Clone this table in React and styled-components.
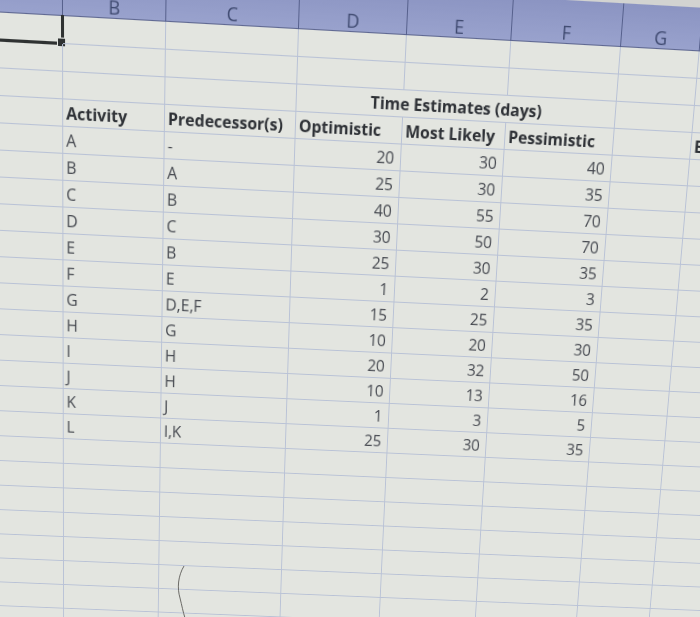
import React from "react";
import styled, { createGlobalStyle } from "styled-components";

// photo of an Excel sheet: the flat grid is laid out normally, then the whole
// sheet gets a perspective warp (matrix3d) so it sits like in the photo

const COLS = [
  { key: "A", width: 83 },
  { key: "B", width: 102 },
  { key: "C", width: 132 },
  { key: "D", width: 108 },
  { key: "E", width: 105 },
  { key: "F", width: 111 },
  { key: "G", width: 80 },
  { key: "H", width: 100 },
];

const ROW_H = 26;
const STRIP_H = 10;
const HEAD_H = 40;
const ROW_COUNT = 28;

const DATA = [
  ["A", "-", 20, 30, 40],
  ["B", "A", 25, 30, 35],
  ["C", "B", 40, 55, 70],
  ["D", "C", 30, 50, 70],
  ["E", "B", 25, 30, 35],
  ["F", "E", 1, 2, 3],
  ["G", "D,E,F", 15, 25, 35],
  ["H", "G", 10, 20, 30],
  ["I", "H", 20, 32, 50],
  ["J", "H", 10, 13, 16],
  ["K", "J", 1, 3, 5],
  ["L", "I,K", 25, 30, 35],
];

const template = COLS.map((c) => `${c.width}px`).join(" ");

function solve(A, b) {
  const n = b.length;
  const M = A.map((row, i) => [...row, b[i]]);
  for (let c = 0; c < n; c++) {
    let p = c;
    for (let r = c + 1; r < n; r++) if (Math.abs(M[r][c]) > Math.abs(M[p][c])) p = r;
    [M[c], M[p]] = [M[p], M[c]];
    for (let r = 0; r < n; r++) {
      if (r === c) continue;
      const f = M[r][c] / M[c][c];
      for (let k = c; k <= n; k++) M[r][k] -= f * M[c][k];
    }
  }
  return M.map((row, i) => row[n] / row[i]);
}

function warp(src, dst) {
  const A = [];
  const b = [];
  src.forEach(([x, y], i) => {
    const [u, v] = dst[i];
    A.push([x, y, 1, 0, 0, 0, -u * x, -u * y]);
    b.push(u);
    A.push([0, 0, 0, x, y, 1, -v * x, -v * y]);
    b.push(v);
  });
  const h = solve(A, b);
  return `matrix3d(${h[0]},${h[3]},0,${h[6]},${h[1]},${h[4]},0,${h[7]},0,0,1,0,${h[2]},${h[5]},0,1)`;
}

const headBottom = STRIP_H + HEAD_H;
const fgLine = 83 + 102 + 132 + 108 + 105 + 111;
const lowLine = headBottom + 22 * ROW_H;

const SHEET_TRANSFORM = warp(
  [
    [83, headBottom],
    [fgLine, headBottom],
    [83, lowLine],
    [fgLine, lowLine],
  ],
  [
    [63, 15],
    [621, 46],
    [64, 584],
    [578, 605],
  ]
);

const GlobalStyle = createGlobalStyle`
  html, body {
    margin: 0;
    padding: 0;
    width: 700px;
    height: 617px;
    overflow: hidden;
    background: #d9dbd7;
  }
  body {
    font-family: "Open Sans", "Liberation Sans", sans-serif;
  }
`;

const Page = styled.div`
  position: relative;
  width: 700px;
  height: 617px;
  overflow: hidden;
`;

const Sheet = styled.div`
  width: max-content;
  transform-origin: 0 0;
  background: #e3e5e0;
  display: flex;
  flex-direction: column;
`;

const TopStrip = styled.div`
  height: ${STRIP_H}px;
  background: #d2d3d1;
`;

const HeaderRow = styled.div`
  display: grid;
  grid-template-columns: ${template};
  height: ${HEAD_H}px;
  background: linear-gradient(#8b94c2, #99a2cd);
  border-bottom: 1px solid #5f6891;
`;

const HeaderCell = styled.div`
  display: flex;
  align-items: center;
  justify-content: center;
  padding-top: 18px;
  border-right: 1.5px solid #56608c;
  color: #3f4a70;
  font-size: 18px;
`;

const Row = styled.div`
  display: grid;
  grid-template-columns: ${template};
  height: ${ROW_H}px;
`;

const Cell = styled.div`
  position: relative;
  display: flex;
  align-items: flex-end;
  justify-content: ${(p) => (p.$num ? "flex-end" : p.$center ? "center" : "flex-start")};
  padding: 0 ${(p) => (p.$num ? "6px" : "3px")} 2px 3px;
  border-right: 1px solid #b9c2d6;
  border-bottom: 1px solid #b9c2d6;
  grid-column: ${(p) => (p.$span ? `span ${p.$span}` : "auto")};
  color: ${(p) => (p.$bold ? "#2e3136" : "#474a51")};
  font-weight: ${(p) => (p.$bold ? 700 : 400)};
  font-size: 16px;
  line-height: 20px;
  white-space: nowrap;
  overflow: visible;
`;

const Selected = styled.div`
  position: absolute;
  left: -2px;
  top: -1px;
  right: -2px;
  bottom: -2px;
  border-right: 3px solid #2f3232;
  border-bottom: 3px solid #2f3232;
`;

const FillHandle = styled.span`
  position: absolute;
  right: -5px;
  bottom: -5px;
  width: 7px;
  height: 7px;
  background: #2f3232;
  border: 1px solid #e4e6e2;
`;

const PenMark = styled.svg`
  position: absolute;
  left: 170px;
  top: 560px;
  pointer-events: none;
`;

function buildRows() {
  const rows = [];
  for (let i = 1; i <= ROW_COUNT; i++) {
    let cells;
    if (i === 1) {
      cells = COLS.map((c) => (
        <Cell key={c.key}>
          {c.key === "A" && (
            <Selected>
              <FillHandle />
            </Selected>
          )}
        </Cell>
      ));
    } else if (i === 3) {
      cells = [
        <Cell key="A" />,
        <Cell key="B" />,
        <Cell key="C" />,
        <Cell key="DF" $span={3} $center $bold>
          Time Estimates (days)
        </Cell>,
        <Cell key="G" />,
        <Cell key="H" />,
      ];
    } else if (i === 4) {
      const heads = ["", "Activity", "Predecessor(s)", "Optimistic", "Most Likely", "Pessimistic", "", "Expected"];
      cells = heads.map((t, k) => (
        <Cell key={k} $bold>
          {t}
        </Cell>
      ));
    } else if (i >= 5 && i < 5 + DATA.length) {
      const [act, pred, o, m, p] = DATA[i - 5];
      cells = [
        <Cell key="A" />,
        <Cell key="B">{act}</Cell>,
        <Cell key="C">{pred}</Cell>,
        <Cell key="D" $num>{o}</Cell>,
        <Cell key="E" $num>{m}</Cell>,
        <Cell key="F" $num>{p}</Cell>,
        <Cell key="G" />,
        <Cell key="H" />,
      ];
    } else {
      cells = COLS.map((c) => <Cell key={c.key} />);
    }
    rows.push(<Row key={i}>{cells}</Row>);
  }
  return rows;
}

export default function App() {
  return (
    <Page>
      <GlobalStyle />
      <Sheet style={{ transform: SHEET_TRANSFORM }}>
        <TopStrip />
        <HeaderRow>
          {COLS.map((c) => (
            <HeaderCell key={c.key}>{c.key === "A" ? "" : c.key}</HeaderCell>
          ))}
        </HeaderRow>
        {buildRows()}
      </Sheet>
      <PenMark width="30" height="60" viewBox="0 0 30 60">
        <path d="M14 6 C 8 16, 7 28, 10 38 C 12 46, 13 52, 15 58" fill="none" stroke="#6b6a66" strokeWidth="1" />
      </PenMark>
    </Page>
  );
}
